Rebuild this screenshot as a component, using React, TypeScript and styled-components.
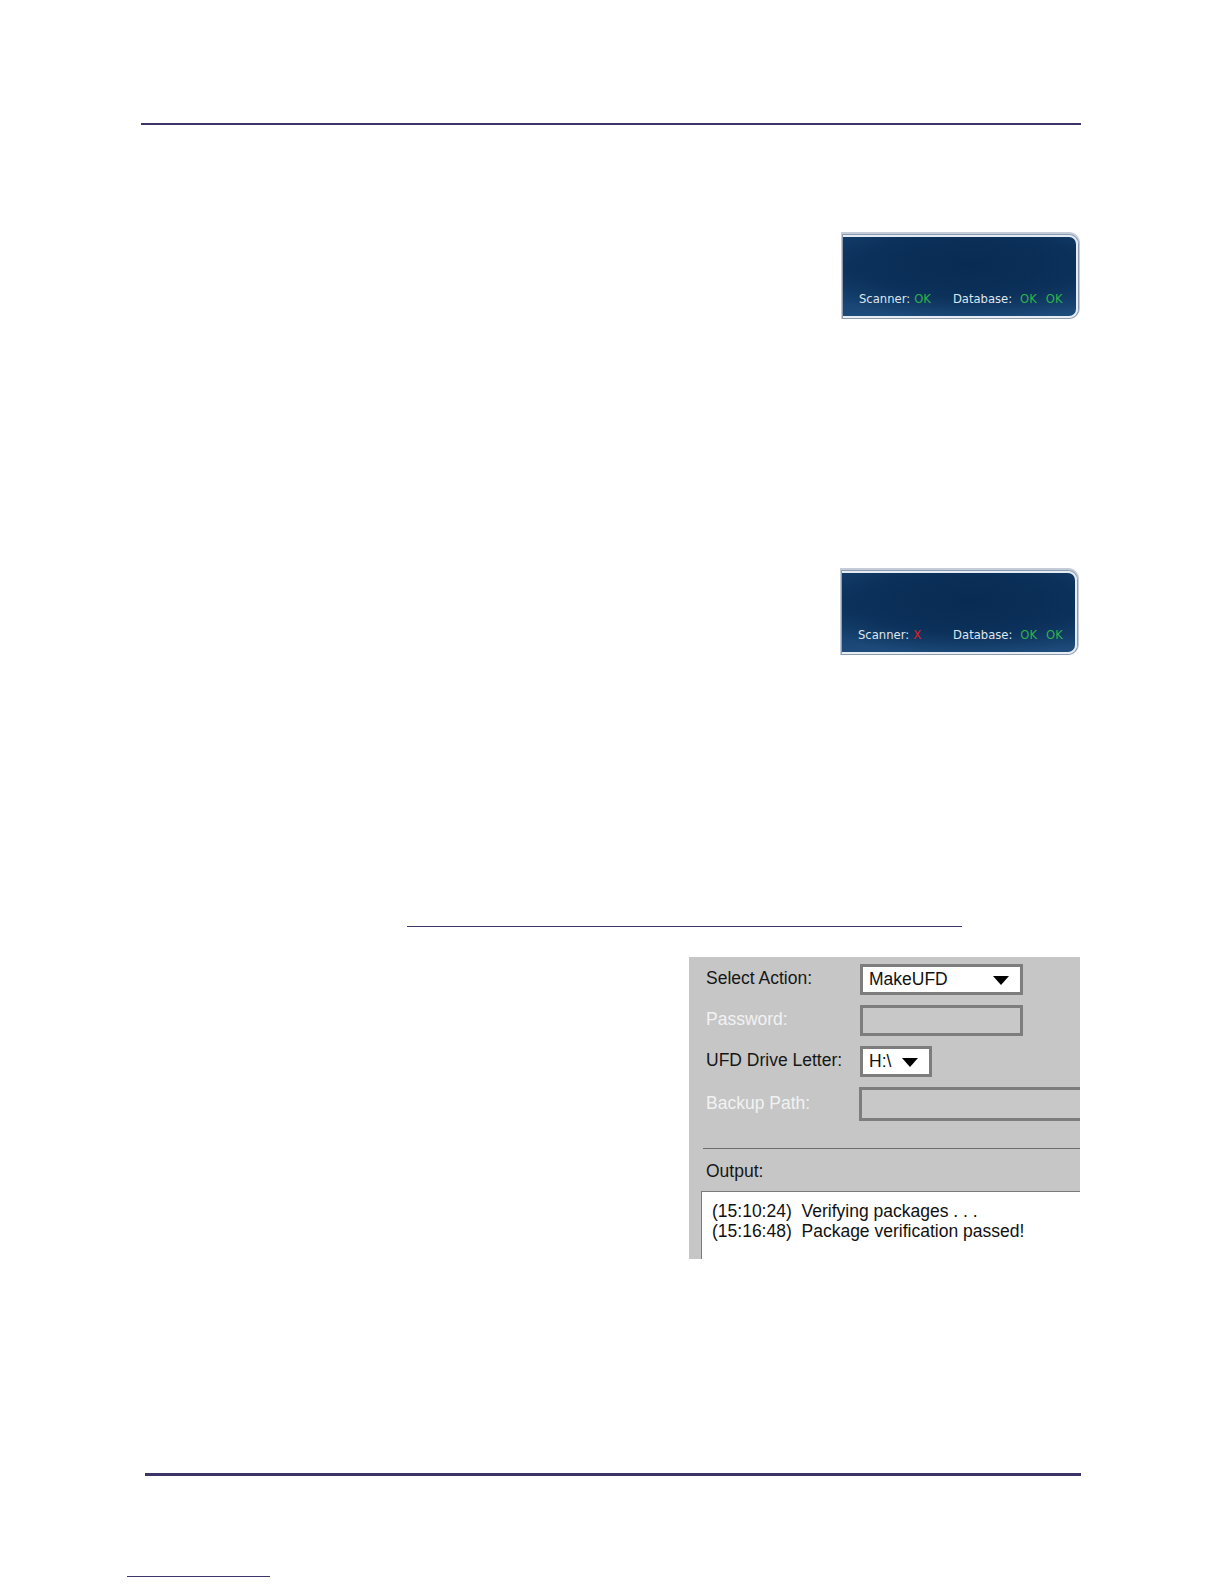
import React from 'react';
import styled, { createGlobalStyle } from 'styled-components';

const Global = createGlobalStyle`
  html, body { margin: 0; padding: 0; background: #ffffff; }
  body { font-family: "Liberation Sans", Arial, sans-serif; }
`;

const Page = styled.div`
  width: 1224px;
  height: 1584px;
  display: flex;
  flex-direction: column;
  overflow: hidden;
`;

const Rule = styled.div<{ $top: number; $left: number; $width: number; $thick: number }>`
  margin-top: ${p => p.$top}px;
  margin-left: ${p => p.$left}px;
  width: ${p => p.$width}px;
  height: ${p => p.$thick}px;
  background: #3d3468;
  flex-shrink: 0;
`;

const StatusRow = styled.div<{ $top: number; $right: number }>`
  margin-top: ${p => p.$top}px;
  padding-right: ${p => p.$right}px;
  display: flex;
  justify-content: flex-end;
  flex-shrink: 0;
`;

const StatusFrame = styled.div`
  width: 235px;
  height: 83px;
  border: 2px solid #e6ecf3;
  border-left: none;
  border-radius: 0 9px 9px 0;
  box-shadow: 0 0 0 1px #8d9bb0, 0 -1px 0 2px #c3ccd8;
  background:
    radial-gradient(ellipse 75% 70% at 55% 35%, #082b52 0%, #0b3059 55%, rgba(11, 48, 89, 0) 100%),
    linear-gradient(180deg, #14406e 0%, #0d355f 40%, #1d4b7b 100%);
  display: flex;
  align-items: flex-end;
  padding: 0 0 10px 16px;
  box-sizing: border-box;
`;

const StatusText = styled.div`
  font-family: "DejaVu Sans", Tahoma, sans-serif;
  font-size: 11.6px;
  color: #dfe6ee;
  display: flex;
  gap: 4px;
  white-space: nowrap;
`;

const Flag = styled.span<{ $ok: boolean }>`
  color: ${p => (p.$ok ? '#2fb24c' : '#e02020')};
`;

const Spacer = styled.span<{ $w: number }>`
  display: inline-block;
  width: ${p => p.$w}px;
`;

const ToolPanel = styled.div`
  margin-top: 30px;
  margin-left: 689px;
  width: 391px;
  height: 302px;
  background: #c6c6c6;
  overflow: hidden;
  box-sizing: border-box;
  padding-top: 7px;
  font-size: 17.5px;
  flex-shrink: 0;
`;

const Form = styled.div`
  display: grid;
  grid-template-columns: 154px 1fr;
  grid-template-rows: 31px 31px 31px 34px;
  padding-left: 17px;
  row-gap: 10px;
  align-items: center;
`;

const Label = styled.div<{ $disabled?: boolean }>`
  color: ${p => (p.$disabled ? '#f2f2f2' : '#161616')};
  margin-top: -2px;
`;

const Field = styled.div<{ $w: number; $h?: number; $disabled?: boolean }>`
  width: ${p => p.$w}px;
  height: ${p => p.$h ?? 31}px;
  box-sizing: border-box;
  border: 3px solid #7d7d7d;
  background: ${p => (p.$disabled ? '#c8c8c8' : '#ffffff')};
  display: flex;
  align-items: center;
  justify-content: space-between;
  padding: 0 11px 0 6px;
  color: #111;
`;

const Arrow = styled.span`
  width: 0;
  height: 0;
  border-left: 8px solid transparent;
  border-right: 8px solid transparent;
  border-top: 9px solid #000;
  margin-top: 2px;
`;

const Separator = styled.div`
  margin: 27px 0 0 14px;
  height: 1px;
  background: #6e6e6e;
`;

const OutputLabel = styled.div`
  margin: 12px 0 0 17px;
  line-height: 20px;
  color: #161616;
`;

const OutputBox = styled.div`
  margin: 10px 0 0 12px;
  height: 80px;
  background: #ffffff;
  border-top: 1px solid #7a7a7a;
  border-left: 1px solid #7a7a7a;
  padding: 9px 0 0 10px;
  line-height: 20px;
  color: #111;
  white-space: pre;
`;

function StatusPanel({ scanner, top, right }: { scanner: boolean; top: number; right: number }) {
  return (
    <StatusRow $top={top} $right={right}>
      <StatusFrame>
        <StatusText>
          <span>Scanner:</span>
          <Flag $ok={scanner}>{scanner ? 'OK' : 'X'}</Flag>
          <Spacer $w={scanner ? 14 : 24} />
          <span>Database:</span>
          <Spacer $w={0} />
          <Flag $ok>OK</Flag>
          <Spacer $w={1} />
          <Flag $ok>OK</Flag>
        </StatusText>
      </StatusFrame>
    </StatusRow>
  );
}

export default function App() {
  return (
    <Page>
      <Global />
      <Rule $top={123} $left={141} $width={940} $thick={2} />
      <StatusPanel scanner top={110} right={146} />
      <StatusPanel scanner={false} top={253} right={147} />
      <Rule $top={272} $left={407} $width={555} $thick={1} />
      <ToolPanel>
        <Form>
          <Label>Select Action:</Label>
          <Field $w={163}>
            <span>MakeUFD</span>
            <Arrow />
          </Field>
          <Label $disabled>Password:</Label>
          <Field $w={163} $disabled />
          <Label>UFD Drive Letter:</Label>
          <Field $w={72}>
            <span>H:\</span>
            <Arrow />
          </Field>
          <Label $disabled>Backup Path:</Label>
          <Field $w={240} $h={34} $disabled style={{ marginLeft: -1 }} />
        </Form>
        <Separator />
        <OutputLabel>Output:</OutputLabel>
        <OutputBox>
          {'(15:10:24)  Verifying packages . . .\n(15:16:48)  Package verification passed!'}
        </OutputBox>
      </ToolPanel>
      <Rule $top={214} $left={145} $width={936} $thick={3} />
      <Rule $top={100} $left={127} $width={143} $thick={1} />
    </Page>
  );
}
